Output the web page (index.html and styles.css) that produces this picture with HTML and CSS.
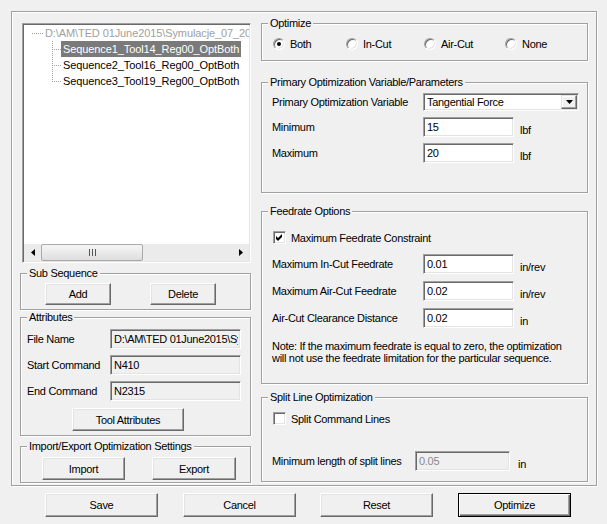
FILE: index.html
```html
<!DOCTYPE html>
<html lang="en">
<head>
    <meta charset="UTF-8">
    <title>Sequence Optimization</title>
    <link rel="stylesheet" href="styles.css">
</head>
<body>
    <div class="frame">
        <!-- Left side: sequence tree and attributes -->
        <div class="col-left">
            <div class="tree">
                <div class="tree-body">
                    <div class="node root">
                        <span class="hline"></span>
                        <span class="label">D:\AM\TED 01June2015\Symulacje_07_2015\Sequences</span>
                    </div>
                    <div class="node">
                        <span class="branch"></span>
                        <span class="label selected">Sequence1_Tool14_Reg00_OptBoth</span>
                    </div>
                    <div class="node">
                        <span class="branch"></span>
                        <span class="label">Sequence2_Tool16_Reg00_OptBoth</span>
                    </div>
                    <div class="node last">
                        <span class="branch"></span>
                        <span class="label">Sequence3_Tool19_Reg00_OptBoth</span>
                    </div>
                </div>
                <div class="hscroll">
                    <div class="sb-btn">
                        <svg width="4" height="7" viewBox="0 0 4 7"><path d="M4 0L0 3.5L4 7Z" fill="#000"/></svg>
                    </div>
                    <div class="sb-thumb">
                        <svg width="7" height="7" viewBox="0 0 7 7"><path d="M0.5 0V7M3.5 0V7M6.5 0V7" stroke="#555"/></svg>
                    </div>
                    <div class="sb-track"></div>
                    <div class="sb-btn">
                        <svg width="4" height="7" viewBox="0 0 4 7"><path d="M0 0L4 3.5L0 7Z" fill="#000"/></svg>
                    </div>
                </div>
            </div>

            <div class="group sub">
                <div class="group-title">Sub Sequence</div>
                <div class="group-body btn-row">
                    <button class="btn add">Add</button>
                    <button class="btn delete">Delete</button>
                </div>
            </div>

            <div class="group attrs">
                <div class="group-title">Attributes</div>
                <div class="group-body">
                    <div class="attr-row">
                        <span class="attr-label">File Name</span>
                        <input class="field ro" type="text" value="D:\AM\TED 01June2015\Symulacje_07_2015\Sequence1.apt" readonly>
                    </div>
                    <div class="attr-row">
                        <span class="attr-label">Start Command</span>
                        <input class="field ro" type="text" value="N410" readonly>
                    </div>
                    <div class="attr-row">
                        <span class="attr-label">End Command</span>
                        <input class="field ro" type="text" value="N2315" readonly>
                    </div>
                    <button class="btn tool-attrs">Tool Attributes</button>
                </div>
            </div>

            <div class="group io">
                <div class="group-title">Import/Export Optimization Settings</div>
                <div class="group-body btn-row">
                    <button class="btn import">Import</button>
                    <button class="btn export">Export</button>
                </div>
            </div>
        </div>

        <!-- Right side: optimization settings -->
        <div class="col-right">
            <div class="group opt">
                <div class="group-title">Optimize</div>
                <div class="group-body radios">
                    <label class="choice"><span class="radio checked"></span>Both</label>
                    <label class="choice"><span class="radio"></span>In-Cut</label>
                    <label class="choice"><span class="radio"></span>Air-Cut</label>
                    <label class="choice"><span class="radio"></span>None</label>
                </div>
            </div>

            <div class="group primary">
                <div class="group-title">Primary Optimization Variable/Parameters</div>
                <div class="group-body">
                    <div class="form-row combo-row">
                        <span class="form-label">Primary Optimization Variable</span>
                        <div class="combo">
                            <span class="combo-text">Tangential Force</span>
                            <span class="combo-btn">
                                <svg width="7" height="4" viewBox="0 0 7 4"><path d="M0 0H7L3.5 4Z" fill="#000"/></svg>
                            </span>
                        </div>
                    </div>
                    <div class="form-row">
                        <span class="form-label">Minimum</span>
                        <input class="field num" type="text" value="15">
                        <span class="unit">lbf</span>
                    </div>
                    <div class="form-row">
                        <span class="form-label">Maximum</span>
                        <input class="field num" type="text" value="20">
                        <span class="unit">lbf</span>
                    </div>
                </div>
            </div>

            <div class="group feed">
                <div class="group-title">Feedrate Options</div>
                <div class="group-body">
                    <label class="check-row"><span class="checkbox">
                        <svg width="7" height="7" viewBox="0 0 7 7"><path d="M0 2L2 4L6 0V3L2 7L0 5Z" fill="#000"/></svg>
                    </span>Maximum Feedrate Constraint</label>
                    <div class="form-row first">
                        <span class="form-label">Maximum In-Cut Feedrate</span>
                        <input class="field num" type="text" value="0.01">
                        <span class="unit">in/rev</span>
                    </div>
                    <div class="form-row">
                        <span class="form-label">Maximum Air-Cut Feedrate</span>
                        <input class="field num" type="text" value="0.02">
                        <span class="unit">in/rev</span>
                    </div>
                    <div class="form-row">
                        <span class="form-label">Air-Cut Clearance Distance</span>
                        <input class="field num" type="text" value="0.02">
                        <span class="unit">in</span>
                    </div>
                    <p class="note">Note: If the maximum feedrate is equal to zero, the optimization<br>will not use the feedrate limitation for the particular sequence.</p>
                </div>
            </div>

            <div class="group split">
                <div class="group-title">Split Line Optimization</div>
                <div class="group-body">
                    <label class="check-row"><span class="checkbox"></span>Split Command Lines</label>
                    <div class="form-row split-row">
                        <span class="form-label narrow">Minimum length of split lines</span>
                        <input class="field split-field disabled" type="text" value="0.05" disabled>
                        <span class="unit">in</span>
                    </div>
                </div>
            </div>
        </div>
    </div>

    <div class="actions">
        <button class="btn action">Save</button>
        <button class="btn action">Cancel</button>
        <button class="btn action reset">Reset</button>
        <button class="btn action default">Optimize</button>
    </div>
</body>
</html>
```

FILE: styles.css
```css
body {
    margin: 0;
    width: 607px;
    height: 524px;
    overflow: hidden;
    background-color: #f0f0f0;
    font-family: "Liberation Sans", Arial, sans-serif;
    font-size: 11px;
    letter-spacing: -0.3px;
    color: #000;
}

/* etched outer frame */
.frame {
    box-sizing: border-box;
    width: 586px;
    height: 475px;
    margin: 11px 0 0 11px;
    padding: 11px 8px 0;
    border: 1px solid #a0a0a0;
    box-shadow: inset 1px 1px 0 #fff, 1px 1px 0 #fff;
    display: flex;
    gap: 10px;
}

.col-left {
    width: 231px;
    display: flex;
    flex-direction: column;
}

.col-right {
    width: 327px;
    display: flex;
    flex-direction: column;
}

/* tree view */
.tree {
    box-sizing: border-box;
    width: 229px;
    height: 240px;
    margin-left: 2px;
    padding: 1px;
    border: 1px solid;
    border-color: #a0a0a0 #fff #fff #a0a0a0;
    box-shadow: inset 1px 1px 0 #696969, inset -1px -1px 0 #e3e3e3;
    background-color: #fff;
    display: flex;
    flex-direction: column;
}

.tree-body {
    flex: 1;
    overflow: hidden;
    letter-spacing: -0.1px;
}

.node {
    display: flex;
    align-items: center;
    height: 16px;
    white-space: nowrap;
}

.node .label {
    padding: 0 2px;
    line-height: 16px;
}

.root .hline {
    flex: none;
    width: 11px;
    height: 1px;
    margin-left: 8px;
    background: repeating-linear-gradient(to right, #a0a0a0 0 1px, transparent 1px 2px);
}

.root .label {
    color: #a0a0a0;
}

.branch {
    flex: none;
    width: 9px;
    height: 16px;
    margin-left: 28px;
    background:
        repeating-linear-gradient(to right, #a0a0a0 0 1px, transparent 1px 2px) 0 8px / 9px 1px no-repeat,
        repeating-linear-gradient(to bottom, #a0a0a0 0 1px, transparent 1px 2px) 0 0 / 1px 16px no-repeat;
}

.node.last .branch {
    background:
        repeating-linear-gradient(to right, #a0a0a0 0 1px, transparent 1px 2px) 0 8px / 9px 1px no-repeat,
        repeating-linear-gradient(to bottom, #a0a0a0 0 1px, transparent 1px 2px) 0 0 / 1px 9px no-repeat;
}

.selected {
    background-color: #7a7a7a;
    color: #fff;
}

.hscroll {
    height: 17px;
    display: flex;
    background-color: #ebebeb;
}

.sb-btn {
    width: 17px;
    display: flex;
    align-items: center;
    justify-content: center;
}

.sb-thumb {
    box-sizing: border-box;
    width: 102px;
    border: 1px solid #a9a9a9;
    border-radius: 2px;
    background: linear-gradient(#f6f6f6, #dedede);
    display: flex;
    align-items: center;
    justify-content: center;
}

.sb-track {
    flex: 1;
}

/* group boxes */
.group {
    box-sizing: border-box;
    border: 1px solid #a0a0a0;
    box-shadow: inset 1px 1px 0 #fff, 1px 1px 0 #fff;
}

.group-title {
    width: max-content;
    height: 13px;
    line-height: 13px;
    margin: -7px 0 -6px 6px;
    padding: 0 2px;
    background-color: #f0f0f0;
}

.btn-row {
    display: flex;
}

/* buttons */
.btn {
    box-sizing: border-box;
    height: 23px;
    padding: 0;
    font: inherit;
    letter-spacing: inherit;
    color: #000;
    background-color: #f0f0f0;
    border: 1px solid;
    border-color: #fff #696969 #696969 #fff;
    box-shadow: inset -1px -1px 0 #a0a0a0, inset 1px 1px 0 #e3e3e3;
}

.btn.default {
    border-color: #000;
    box-shadow: inset 1px 1px 0 #fff, inset -1px -1px 0 #696969, inset -2px -2px 0 #a0a0a0;
}

.sub {
    height: 37px;
    margin-top: 10px;
}

.sub .group-body {
    padding: 9px 0 0 24px;
}

.sub .btn {
    width: 66px;
    height: 22px;
}

.sub .delete {
    margin-left: 39px;
}

.attrs {
    height: 119px;
    margin-top: 7px;
}

.attrs .group-body {
    padding: 11px 9px 0 6px;
}

.attr-row {
    display: flex;
    align-items: center;
    height: 20px;
}

.attr-row + .attr-row {
    margin-top: 6px;
}

.attr-label {
    width: 83px;
}

.attr-row .field {
    width: 131px;
}

.tool-attrs {
    display: block;
    width: 112px;
    margin: 7px 0 0 45px;
}

.io {
    height: 37px;
    margin-top: 10px;
}

.io .group-body {
    padding: 10px 0 0 21px;
}

.io .import {
    width: 83px;
}

.io .export {
    width: 84px;
    margin-left: 27px;
}

/* fields */
.field {
    box-sizing: border-box;
    height: 20px;
    margin: 0;
    padding: 0 2px 0 3px;
    font: inherit;
    letter-spacing: inherit;
    color: #000;
    background-color: #fff;
    border: 1px solid;
    border-color: #a0a0a0 #fff #fff #a0a0a0;
    box-shadow: inset 1px 1px 0 #696969, inset -1px -1px 0 #e3e3e3;
    outline: none;
}

.field.ro {
    background-color: #f0f0f0;
}

.field.disabled {
    background-color: #f0f0f0;
    color: #8a8a8a;
}

/* right side */
.opt {
    height: 38px;
}

.opt .group-body {
    padding: 13px 0 0 11px;
}

.radios {
    display: grid;
    grid-template-columns: 73px 78px 81px auto;
}

.choice {
    display: flex;
    align-items: center;
    gap: 5px;
    height: 13px;
}

.radio {
    box-sizing: border-box;
    width: 12px;
    height: 12px;
    border-radius: 50%;
    border: 1px solid;
    border-color: #a0a0a0 #fff #fff #a0a0a0;
    box-shadow: inset 1px 1px 0 #696969, inset -1px -1px 0 #e3e3e3;
    background-color: #fff;
    display: flex;
    align-items: center;
    justify-content: center;
}

.radio.checked::after {
    content: "";
    width: 4px;
    height: 4px;
    border-radius: 50%;
    background-color: #000;
}

.primary {
    height: 111px;
    margin-top: 21px;
}

.primary .group-body {
    padding: 10px 0 0 10px;
}

.form-row {
    display: flex;
    align-items: center;
    height: 20px;
}

.form-row.combo-row {
    height: 18px;
}

.form-row + .form-row {
    margin-top: 6px;
}

.feed .form-row + .form-row {
    margin-top: 7px;
}

.form-label {
    width: 151px;
}

.form-label.narrow {
    width: 143px;
}

.field.num {
    width: 91px;
}

.unit {
    align-self: flex-end;
    line-height: 13px;
    margin-left: 6px;
}

.combo {
    box-sizing: border-box;
    width: 156px;
    height: 18px;
    padding: 1px;
    display: flex;
    background-color: #fff;
    border: 1px solid;
    border-color: #a0a0a0 #fff #fff #a0a0a0;
    box-shadow: inset 1px 1px 0 #696969, inset -1px -1px 0 #e3e3e3;
}

.combo-text {
    flex: 1;
    padding-left: 2px;
    line-height: 14px;
}

.combo-btn {
    box-sizing: border-box;
    width: 16px;
    display: flex;
    align-items: center;
    justify-content: center;
    background-color: #f0f0f0;
    border: 1px solid;
    border-color: #e3e3e3 #696969 #696969 #e3e3e3;
    box-shadow: inset -1px -1px 0 #a0a0a0, inset 1px 1px 0 #fff;
}

.feed {
    height: 173px;
    margin-top: 18px;
}

.feed .group-body {
    padding: 19px 0 0 10px;
}

.check-row {
    display: flex;
    align-items: center;
    gap: 5px;
    height: 13px;
    margin-left: 1px;
}

.checkbox {
    box-sizing: border-box;
    width: 13px;
    height: 13px;
    border: 1px solid;
    border-color: #a0a0a0 #fff #fff #a0a0a0;
    box-shadow: inset 1px 1px 0 #696969, inset -1px -1px 0 #e3e3e3;
    background-color: #fff;
    display: flex;
    align-items: center;
    justify-content: center;
}

.feed .form-row.first {
    margin-top: 10px;
}

.note {
    margin: 12px 0 0;
    line-height: 12px;
}

.split {
    height: 85px;
    margin-top: 13px;
}

.split .group-body {
    padding: 14px 0 0 10px;
}

.split-row {
    margin-top: 26px;
}

.split-field {
    width: 95px;
}

.split .unit {
    margin-left: 8px;
}

/* bottom buttons */
.actions {
    display: flex;
    gap: 25px;
    padding: 7px 0 0 45px;
}

.btn.action {
    width: 113px;
    height: 24px;
}

.btn.reset {
    margin-left: -1px;
}
```
